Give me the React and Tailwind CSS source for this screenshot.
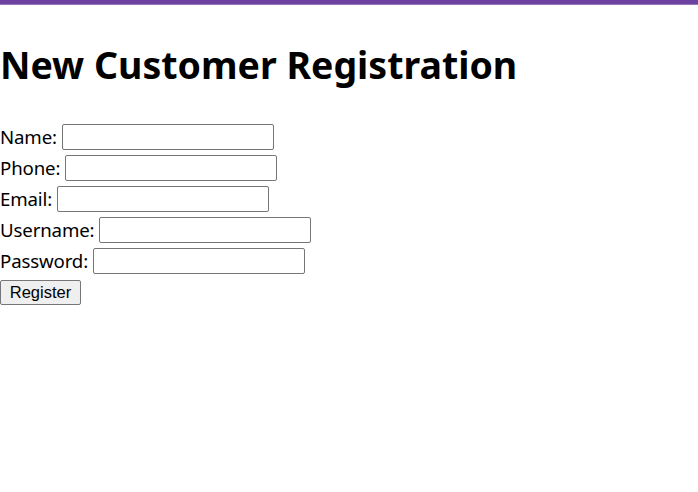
import React from 'react'

const fields = [
  { label: 'Name:', type: 'text' },
  { label: 'Phone:', type: 'text' },
  { label: 'Email:', type: 'email' },
  { label: 'Username:', type: 'text' },
  { label: 'Password:', type: 'password' },
]

export default function App() {
  return (
    <div className="min-h-screen bg-white text-black" style={{ fontFamily: '"Noto Sans", "Open Sans", sans-serif' }}>
      <div className="h-[4px] bg-[#6c41a0]" />
      <div className="h-[1px] bg-[#9574bb]" />

      <h1 className="mt-[38px] text-[37.5px] font-bold leading-[44px]">New Customer Registration</h1>

      <form className="mt-[34px] flex flex-col" onSubmit={(e) => e.preventDefault()}>
        {fields.map((f) => (
          <div key={f.label} className="flex h-[31px] items-center text-[18.67px] tracking-[-0.15px]">
            <label>{f.label}</label>
            <input
              type={f.type}
              className="ml-[5px] h-[26px] w-[212px] rounded-[2px] border border-[#767676] bg-white px-1 outline-none"
            />
          </div>
        ))}
        <div className="mt-[4px]">
          <button
            type="submit"
            className="h-[25px] w-[81px] rounded-[2px] border border-[#767676] bg-[#efefef] text-[16.5px] leading-none text-black"
            style={{ fontFamily: '"Liberation Sans", Arial, sans-serif' }}
          >
            Register
          </button>
        </div>
      </form>
    </div>
  )
}
